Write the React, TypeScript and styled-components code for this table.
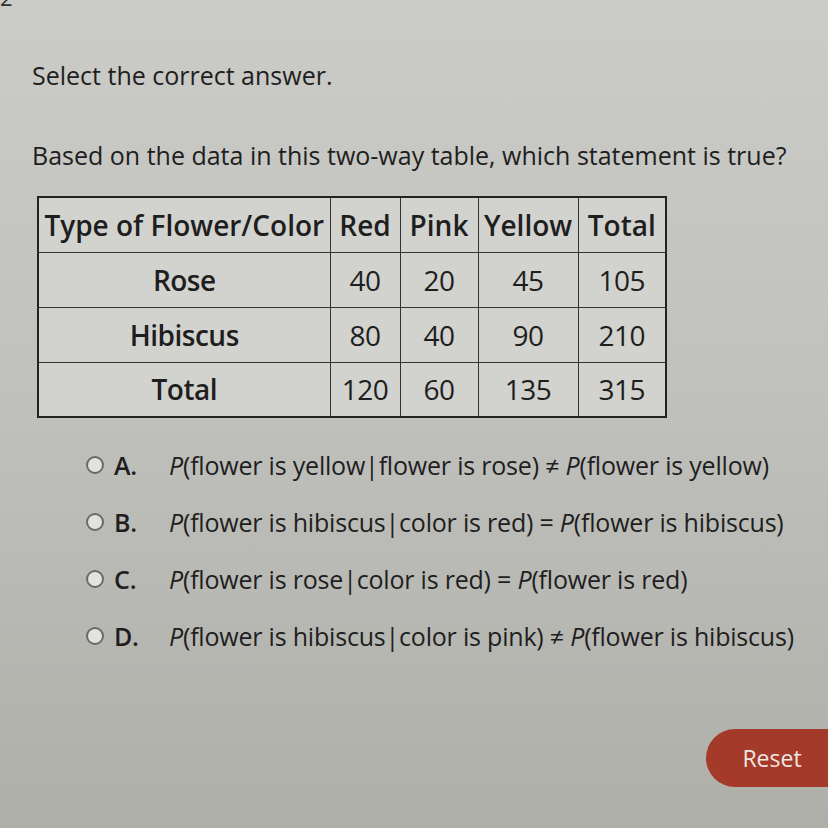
import React from 'react'
import styled, { createGlobalStyle } from 'styled-components'

const GlobalStyle = createGlobalStyle`
  html, body {
    margin: 0;
    padding: 0;
    width: 828px;
    height: 828px;
    overflow: hidden;
  }
  body {
    background: linear-gradient(180deg, #cbcbc7 0%, #c1c1bd 45%, #afafaa 100%);
    font-family: 'Open Sans', 'Liberation Sans', sans-serif;
    color: #1e1e1e;
  }
`

const Page = styled.div`
  width: 828px;
  height: 828px;
  display: flex;
  flex-direction: column;
  overflow: hidden;
`

const QuestionNumber = styled.div`
  font-size: 22px;
  line-height: 22px;
  margin: -14px 0 0 0;
  height: 10px;
  color: #333;
`

const Prompt = styled.p`
  margin: 62px 0 0 32px;
  font-size: 25px;
  line-height: 34px;
`

const Question = styled.p`
  margin: 46px 0 0 32px;
  font-size: 25px;
  line-height: 34px;
  white-space: nowrap;
`

const Table = styled.table`
  margin: 24px 0 0 37px;
  width: 628px;
  table-layout: fixed;
  border-collapse: collapse;
  border: 2px solid #222;
  background: #d2d2ce;
`

const Row = styled.tr`
  height: 55px;
`

const Cell = styled.td<{ $head?: boolean }>`
  padding: 0;
  border: 1.5px solid #333;
  text-align: center;
  font-size: 28px;
  font-weight: ${p => (p.$head ? 600 : 400)};
  letter-spacing: ${p => (p.$head ? '0' : '-0.5px')};
  color: #1e1e1e;
  white-space: nowrap;
`

const RowHead = styled(Cell)`
  font-weight: 600;
`

const Options = styled.div`
  display: flex;
  flex-direction: column;
  gap: 27px;
  margin: 32px 0 0 86px;
`

const Option = styled.div`
  display: flex;
  align-items: center;
  height: 30px;
  font-size: 25px;
  letter-spacing: -0.2px;
`

const Radio = styled.span`
  width: 14px;
  height: 14px;
  border-radius: 50%;
  border: 2px solid #6a6a6a;
  background: #e2e2de;
  margin-right: 10px;
  flex-shrink: 0;
`

const Letter = styled.span`
  font-weight: 600;
  width: 55px;
`

const Statement = styled.span`
  white-space: nowrap;
  i { font-style: italic; }
`

const Footer = styled.div`
  display: flex;
  justify-content: flex-end;
  margin-top: 78px;
`

const ResetButton = styled.button`
  width: 130px;
  height: 58px;
  margin-right: -8px;
  border: none;
  border-radius: 29px 0 0 29px;
  background: #a43a29;
  color: #f1e6e2;
  font-family: 'Open Sans', 'Liberation Sans', sans-serif;
  font-size: 23px;
  padding-right: 4px;
`

const widths = [292, 70, 78, 100, 88]

const rows: [string, string[]][] = [
  ['Rose', ['40', '20', '45', '105']],
  ['Hibiscus', ['80', '40', '90', '210']],
  ['Total', ['120', '60', '135', '315']],
]

const options: [string, React.ReactNode][] = [
  ['A.', <><i>P</i>(flower is yellow|flower is rose) ≠ <i>P</i>(flower is yellow)</>],
  ['B.', <><i>P</i>(flower is hibiscus|color is red) = <i>P</i>(flower is hibiscus)</>],
  ['C.', <><i>P</i>(flower is rose|color is red) = <i>P</i>(flower is red)</>],
  ['D.', <><i>P</i>(flower is hibiscus|color is pink) ≠ <i>P</i>(flower is hibiscus)</>],
]

export default function App() {
  return (
    <Page>
      <GlobalStyle />
      <QuestionNumber>2</QuestionNumber>
      <Prompt>Select the correct answer.</Prompt>
      <Question>Based on the data in this two-way table, which statement is true?</Question>
      <Table>
        <colgroup>
          {widths.map((w, i) => <col key={i} style={{ width: w }} />)}
        </colgroup>
        <tbody>
          <Row>
            {['Type of Flower/Color', 'Red', 'Pink', 'Yellow', 'Total'].map((h, i) => (
              <Cell key={h + i} $head>{h}</Cell>
            ))}
          </Row>
          {rows.map(([name, vals]) => (
            <Row key={name}>
              <RowHead>{name}</RowHead>
              {vals.map((v, i) => (
                <Cell key={i}>{v}</Cell>
              ))}
            </Row>
          ))}
        </tbody>
      </Table>
      <Options>
        {options.map(([l, s]) => (
          <Option key={l}>
            <Radio />
            <Letter>{l}</Letter>
            <Statement>{s}</Statement>
          </Option>
        ))}
      </Options>
      <Footer>
        <ResetButton>Reset</ResetButton>
      </Footer>
    </Page>
  )
}
